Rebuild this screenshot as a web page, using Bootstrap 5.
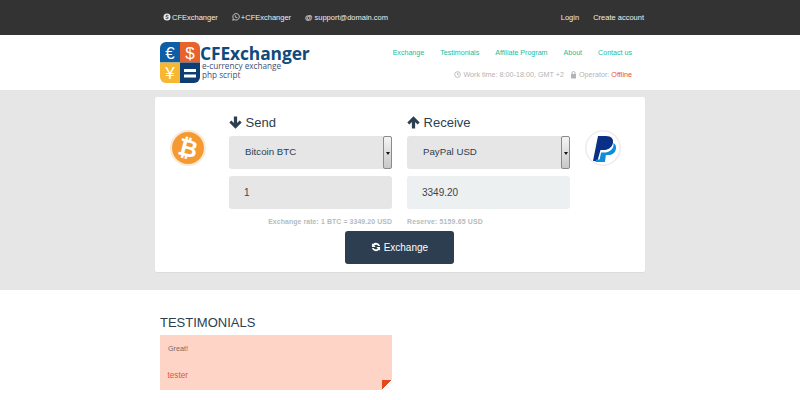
<!DOCTYPE html>
<html lang="en"><head><meta charset="utf-8">
<link href="https://cdn.jsdelivr.net/npm/bootstrap@5.3.0/dist/css/bootstrap.min.css" rel="stylesheet">
<style>
html,body{height:400px;overflow:hidden}
body{font-family:"Liberation Sans",Arial,sans-serif;color:#2c3e50;background:#fff}
.wrap{width:490px;margin:0 auto;box-sizing:content-box}
.topbar{background:#333;height:35px;font-size:7.5px;color:#fff}
.topbar .wrap{height:35px;padding:0 1px 0 8px;width:481px}
.topbar span{color:#eee}
.topbar svg{vertical-align:-1px;margin-right:1px}
.topgap{margin-right:14px}
.topgap2{margin-right:15px}
.head{height:55px}
.head .wrap{width:472px;padding:0 13px 0 5px;height:55px}
.logoname{font-family:"Open Sans",sans-serif;font-weight:700;font-size:17.4px;line-height:14px;color:#0f4a7c;letter-spacing:-.1px}
.logosub{font-family:"Open Sans",sans-serif;font-size:8.200px;line-height:9px;color:#3c4f70;margin:.5px 0 0 2px}
.menu{font-size:7.1px;color:#18bc9c;padding-top:13px;gap:16px}
.stat{font-size:7.2px;color:#b4b4b4;margin-top:11px}
.off{color:#e74c3c}
.band{background:#e6e6e6;height:200px;padding-top:7px}
.panel{background:#fff;width:490px;height:175px;margin:0 auto;border-radius:2px;padding-top:15px;padding-left:15px;box-shadow:0 1px 1px rgba(0,0,0,.05)}
.coinbox{width:59px;flex:none;padding-top:18px}
.coinboxr{width:59px;padding-top:18px;padding-left:15px}
.fcol{width:163px;flex:none}
.fcolgap{margin-left:15px}
.ttl{font-size:13px;line-height:18px;height:24px;color:#2c3e50;padding-top:2px}
.ttl svg{vertical-align:-1.500px}
.pick{background:#e6e6e6;height:33px;border-radius:3px;font-size:9.700px;color:#2c3e50;padding-left:16px}
.arrowbtn{width:9px;height:33px;margin-left:auto;border:1px solid #8a8a8a;border-radius:2px;background:linear-gradient(#f4f4f4,#c8c8c8)}
.arrowbtn::after{content:"";width:0;height:0;border:2px solid transparent;border-top:3px solid #111;margin-top:3px}
.val{display:block;width:100%;height:33px;border:0;border-radius:3px;margin-top:7px;font-size:10px;color:#444;padding:0 15px;background:#e6e6e6}
.valr{background:#ecf0f1}
.note{font-size:6.9px;font-weight:700;color:#b4bcbc;margin-top:7px;line-height:12px;letter-spacing:.1px}
.noter{letter-spacing:.17px}
.exbtn{width:109px;height:33px;background:#2c3e50;color:#fff;font-size:10px;border:0;border-radius:3px;margin:3px 0 0 175px;padding:0}
.tests{width:480px;margin:0 auto;padding-top:24px}
.tests h3{font-size:13px;font-weight:400;margin:0;line-height:18px;height:21px;color:#2c3e50}
.quote{position:relative;width:232px;height:55px;background:#fed4c7;padding:9px 8px;font-size:7.2px;color:#7a6a64}
.who{font-size:8.200px;color:#e2572c;margin-top:15px;margin-left:-.5px}
.fold{position:absolute;right:0;bottom:0;width:10px;height:10px;background:linear-gradient(135deg,#e2491d 50%,#fff 50%)}
</style></head><body>
<div class="topbar"><div class="wrap d-flex align-items-center">
<div class="d-flex"><span class="topgap"><svg width="8" height="8" viewBox="0 0 16 16"><circle cx="8" cy="8" r="7" fill="#eee"/><path d="M11 5.500C9 4 5.500 4.500 5.500 6.300 5.500 8.500 10.800 7.500 10.800 9.800 10.800 11.500 7 12 5 10.500" fill="none" stroke="#333" stroke-width="1.800"/></svg>CFExchanger</span>
<span class="topgap"><svg width="8" height="8" viewBox="0 0 16 16"><path d="M1.500 14.500l1-3.700a6.500 6.500 0 1 1 2.500 2.500z" fill="none" stroke="#eee" stroke-width="1.500"/><path d="M5.500 4.800c-1 1.500 2.500 6 5 5.800l.8-1.300-1.800-1-.8.700c-.8-.4-1.500-1.200-1.800-2l.7-.7-.8-1.800z" fill="#eee"/></svg>+CFExchanger</span>
<span><b>@</b> support@domain.com</span></div>
<div class="ms-auto d-flex"><span class="topgap">Login</span><span>Create account</span></div>
</div></div>
<div class="head"><div class="wrap d-flex">
<div class="d-flex" style="padding-top:7px">
<svg width="40" height="41" viewBox="0 0 40 41"><defs><clipPath id="c"><rect width="40" height="41" rx="6"/></clipPath></defs><g clip-path="url(#c)"><rect width="20" height="20.500" fill="#0d5ea6"/><rect x="20" width="20" height="20.500" fill="#e8622c"/><rect y="20.500" width="20" height="20.500" fill="#f7b733"/><rect x="20" y="20.500" width="20" height="20.500" fill="#0d3d72"/></g><text x="10" y="16.500" text-anchor="middle" font-size="17" font-family="Liberation Sans" fill="#fff">€</text><text x="30" y="16.500" text-anchor="middle" font-size="17" font-family="Liberation Sans" fill="#fff">$</text><text x="10" y="37" text-anchor="middle" font-size="17" font-family="Liberation Sans" fill="#fff">¥</text><rect x="24" y="27" width="12" height="3" fill="#fff"/><rect x="24" y="32.500" width="12" height="3" fill="#fff"/></svg>
<div style="padding-top:4px"><div class="logoname">CFExchanger</div><div class="logosub">e-currency exchange<br>php script</div></div>
</div>
<div class="ms-auto text-end">
<div class="menu d-flex justify-content-end"><span>Exchange</span><span>Testimonials</span><span>Affiliate Program</span><span>About</span><span>Contact us</span></div>
<div class="stat"><svg width="7" height="7" viewBox="0 0 16 16"><circle cx="8" cy="8" r="6.500" fill="none" stroke="#b4b4b4" stroke-width="2"/><path d="M8 4v4.500h3" fill="none" stroke="#b4b4b4" stroke-width="2"/></svg> Work time: 8:00-18:00, GMT +2 &nbsp;&nbsp;<svg width="7" height="8" viewBox="0 0 14 16"><rect x="2" y="6" width="10" height="9" fill="#b4b4b4"/><path d="M4 6V4a3 3 0 0 1 6 0v2" fill="none" stroke="#b4b4b4" stroke-width="2"/></svg> Operator: <span class="off">Offline</span></div>
</div>
</div></div>
<div class="band"><div class="panel">
<div class="d-flex">
<div class="coinbox"><svg width="36" height="36" viewBox="0 0 35 35"><circle cx="17.500" cy="17.500" r="17.500" fill="#fbe9d2"/><circle cx="17.500" cy="17.500" r="15.500" fill="#f59a32"/><text x="17.500" y="25.500" text-anchor="middle" font-family="Liberation Sans" font-weight="700" font-size="23" fill="#fff" transform="rotate(14 17.500 17.500)">₿</text></svg></div>
<div class="fcol"><div class="ttl"><svg width="13" height="13" viewBox="0 0 12 12"><path d="M6 11.700L.3 6l1.900-1.900L4.500 6.400V.4h3v6l2.300-2.300L11.700 6z" fill="#2c3e50"/></svg> Send</div>
<div class="pick d-flex align-items-center"><span>Bitcoin BTC</span><div class="arrowbtn d-flex align-items-center justify-content-center"></div></div>
<input class="val" value="1" readonly>
<div class="note text-end">Exchange rate: 1 BTC = 3349.20 USD</div></div>
<div class="fcol fcolgap"><div class="ttl"><svg width="13" height="13" viewBox="0 0 12 12"><path d="M6 .3L11.700 6 9.800 7.900 7.500 5.600V11.600h-3V5.600L2.200 7.900.3 6z" fill="#2c3e50"/></svg> Receive</div>
<div class="pick d-flex align-items-center"><span>PayPal USD</span><div class="arrowbtn d-flex align-items-center justify-content-center"></div></div>
<input class="val valr" value="3349.20" readonly>
<div class="note noter">Reserve: 5159.65 USD</div></div>
<div class="coinboxr"><svg width="36" height="36" viewBox="0 0 36 36"><circle cx="18" cy="18" r="17.200" fill="#fff" stroke="#efe6ee" stroke-width="1.300"/><path d="M13.500 27l-1 4H8L13 6h8c5.500 0 8 3 6.800 7.500-1 4-4.500 6.500-9 6.500h-3.300z" fill="#0a2f87"/><path d="M14.500 32H10.500l.6-2.500h3.500l1.500-7h3.300c4.500 0 8-2.500 9-6.500.2-1 .2-2-.2-3 2.500 1.200 3.300 3.500 2.700 6-.8 4-4 6-7.800 6h-2.200l-1 7z" fill="#0c8ed9"/></svg></div>
</div>
<button class="exbtn d-block"><svg width="10" height="10" viewBox="0 0 16 16" style="vertical-align:-1px"><path d="M14.500 6.500A6.800 6.800 0 0 0 3 3.500L1.500 2v6h6L5.200 5.700A4 4 0 0 1 11.800 6.500zM1.500 9.500a6.800 6.800 0 0 0 11.500 3l1.500 1.500V8h-6l2.300 2.300A4 4 0 0 1 4.200 9.500z" fill="#fff"/></svg> Exchange</button>
</div></div>
<div class="tests"><h3>TESTIMONIALS</h3>
<div class="quote"><div>Great!</div><div class="who">tester</div><div class="fold"></div></div></div>
</body></html>
